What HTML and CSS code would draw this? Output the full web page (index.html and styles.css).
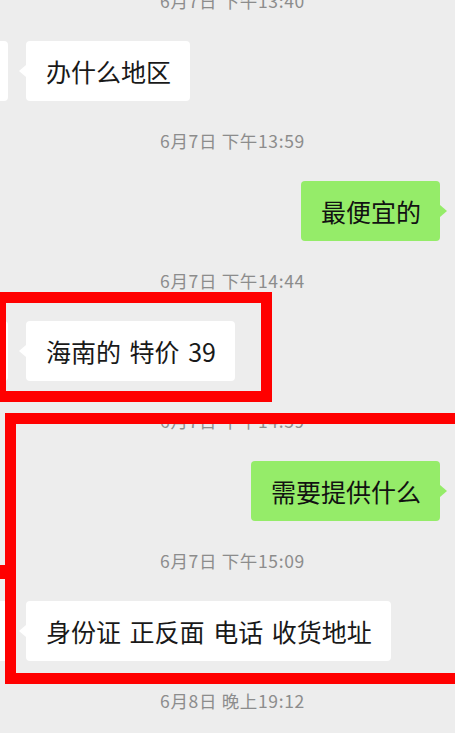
FILE: index.html
```html
<!DOCTYPE html>
<html lang="zh-CN">
<head>
<meta charset="utf-8">
<title>聊天记录</title>
<link rel="stylesheet" href="styles.css">
</head>
<body>
<div class="chat">
  <div class="ts">6月7日 下午13:40</div>
  <div class="row in"><div class="avatar"></div><div class="bubble">办什么地区</div></div>
  <div class="ts">6月7日 下午13:59</div>
  <div class="row out"><div class="bubble green">最便宜的</div></div>
  <div class="ts">6月7日 下午14:44</div>
  <div class="row in"><div class="avatar"></div><div class="bubble">海南的 特价 39</div></div>
  <div class="ts">6月7日 下午14:59</div>
  <div class="row out"><div class="bubble green">需要提供什么</div></div>
  <div class="ts">6月7日 下午15:09</div>
  <div class="row in"><div class="avatar"></div><div class="bubble">身份证 正反面 电话 收货地址</div></div>
  <div class="ts">6月8日 晚上19:12</div>
</div>
<div class="mark mark-one"></div>
<div class="mark mark-two"></div>
<div class="mark-stub"></div>
</body>
</html>
```
FILE: styles.css
```css
html, body {
  margin: 0;
  padding: 0;
}
body {
  width: 455px;
  height: 733px;
  overflow: hidden;
  background: #ededed;
  position: relative;
  font-family: "Noto Sans CJK SC", "Noto Sans", sans-serif;
}
.chat {
  display: flex;
  flex-direction: column;
  margin-top: -9px;
}
.ts {
  height: 20px;
  line-height: 20px;
  margin-bottom: 30px;
  padding-left: 10px;
  text-align: center;
  font-size: 17.5px;
  letter-spacing: 0.65px;
  color: #8c8c8c;
}
.row {
  display: flex;
  align-items: center;
  height: 60px;
  margin-bottom: 30px;
}
.row.out {
  justify-content: flex-end;
  padding-right: 15px;
}
.avatar {
  width: 48px;
  height: 60px;
  margin-left: -40px;
  margin-right: 18px;
  background: #ffffff;
  border-radius: 4px;
  flex: none;
}
.bubble {
  position: relative;
  height: 60px;
  display: flex;
  align-items: center;
  padding: 0 19px 0 20px;
  background: #ffffff;
  border-radius: 4px;
  font-size: 25px;
  word-spacing: 3px;
  color: #191919;
  white-space: nowrap;
}
.bubble::before {
  content: "";
  position: absolute;
  top: 24px;
  left: -7px;
  border-style: solid;
  border-width: 6px 7px 6px 0;
  border-color: transparent #ffffff transparent transparent;
}
.bubble.green {
  background: #95ec69;
  color: #121212;
}
.bubble.green::before {
  left: auto;
  right: -7px;
  border-width: 6px 0 6px 7px;
  border-color: transparent transparent transparent #95ec69;
}
.mark {
  position: absolute;
  border: 11px solid #ff0000;
  box-sizing: border-box;
}
.mark-one {
  left: -5px;
  top: 292px;
  width: 277px;
  height: 110px;
}
.mark-two {
  left: 5px;
  top: 413px;
  width: 470px;
  height: 271px;
}
.mark-stub {
  position: absolute;
  left: 0;
  top: 565px;
  width: 5px;
  height: 14px;
  background: #ff0000;
}
```
